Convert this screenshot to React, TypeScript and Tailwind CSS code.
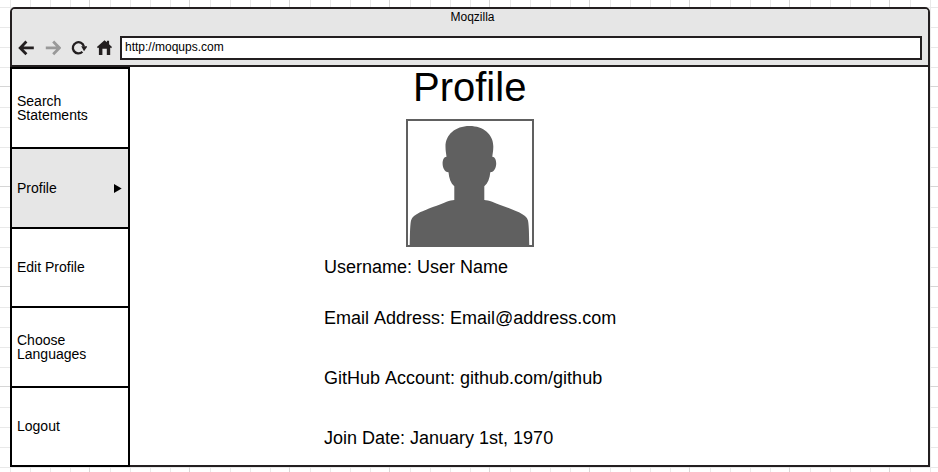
import React from "react";

type MenuItem = { label: string; height: string; active?: boolean };

const menu: MenuItem[] = [
  { label: "Search Statements", height: "h-[80px]" },
  { label: "Profile", height: "h-[80px]", active: true },
  { label: "Edit Profile", height: "h-[79px] pb-px" },
  { label: "Choose Languages", height: "h-[80px]" },
  { label: "Logout", height: "h-[79px] pb-px" },
];

const details = [
  { text: "Username: User Name", height: "h-[51px]" },
  { text: "Email Address: Email@address.com", height: "h-[60px]" },
  { text: "GitHub Account: github.com/github", height: "h-[60px]" },
  { text: "Join Date: January 1st, 1970", height: "h-5" },
];

function Grid() {
  return (
    <svg className="absolute inset-0 h-full w-full" shapeRendering="crispEdges">
      <defs>
        <pattern id="grid" x="10" y="7" width="100" height="100" patternUnits="userSpaceOnUse">
          <path d="M0 .5H100M0 20.5H100M0 40.5H100M0 60.5H100M.5 0V100M20.5 0V100M40.5 0V100M60.5 0V100" stroke="#e9e9e9" />
          <path d="M0 79.5H100M79.5 0V100" stroke="#d6d6d6" />
        </pattern>
      </defs>
      <rect width="100%" height="100%" fill="url(#grid)" />
    </svg>
  );
}

function Toolbar() {
  return (
    <div className="flex h-6 items-center pl-1.5 pr-1.5">
      <svg className="mr-[11px] h-4 w-4" viewBox="0 0 16 16" fill="none" stroke="#231f20" strokeWidth="2.8">
        <path d="M15.800 7.900H2.500M8.400 1.600L2.200 7.900l6.200 6.300" />
      </svg>
      <svg className="mr-[10px] h-4 w-4" viewBox="0 0 16 16" fill="none" stroke="#999" strokeWidth="2.8">
        <path d="M.8 7.900h13.300M8.200 1.600l6.200 6.300-6.200 6.300" />
      </svg>
      <svg className="mr-[9px] h-4 w-4" viewBox="0 0 16 16" fill="none">
        <path d="M11.400 11.800A5.600 5.600 0 1 1 12.900 6.500" stroke="#231f20" strokeWidth="2.3" />
        <path d="M10.200 6.300h6.200L13 11.300z" fill="#231f20" />
      </svg>
      <svg className="mr-2 h-4 w-4" viewBox="0 0 16 16" fill="#231f20">
        <path d="M8.500 .3l2.400 2V.8h2.200v3.400L16 7l-.9 1.200-.9-.6V15h-3.400V8.800H6.400V15H2.900V7.600l-.9.7L.9 7z" />
      </svg>
      <div className="flex h-6 flex-1 items-center border-2 border-[#231f20] bg-white pb-0.5 pl-[3px] text-xs leading-[14px]">
        http://moqups.com
      </div>
    </div>
  );
}

function Sidebar() {
  return (
    <nav className="-ml-0.5 -mb-0.5 w-[120px] shrink-0 border-x-2 border-t-2 border-black bg-white text-sm leading-[14px]">
      {menu.map((item) => (
        <div
          key={item.label}
          className={`flex items-center justify-between border-b-2 border-black pl-[5px] pr-1.5 ${item.height} ${item.active ? "bg-[#e6e6e6]" : ""}`}
        >
          <span className="w-[85px]">{item.label}</span>
          {item.active && (
            <svg className="h-[9px] w-2" viewBox="0 0 8 9">
              <path d="M0 0l7.700 4.500L0 9z" />
            </svg>
          )}
        </div>
      ))}
    </nav>
  );
}

function Avatar() {
  return (
    <svg className="ml-[276px] mt-[11px] h-32 w-32 shrink-0" viewBox="0 0 128 128">
      <rect x="1" y="1" width="126" height="126" fill="white" stroke="#606060" strokeWidth="2" />
      <path
        fill="#606060"
        d="M63.500 7C49 7 39.300 16 39.500 28c0 4 .7 7 1 9.700-5.500 0-5.500 15 2 15.600.5 6 2.300 11 5.800 14V81c-4.300 0-10.300 3-17.600 5.700C22 89.700 17 92 14 93.300 9 96 6 98 5 101.500 3.800 108 4 118 3.700 127h119.600c-.3-9-.1-19-1.300-25.500-1-3.500-4-5.500-9-8.200-3-1.300-8-3.600-16.700-6.600C89 84 82.600 81 78.300 81V67.300c3.500-3 5.500-8 6-14 7.500-.6 7.500-15.600 2-15.600.3-2.700 1-5.700 1-9.700C87.700 16 78 7 63.500 7z"
      />
    </svg>
  );
}

export default function App() {
  return (
    <div className="relative h-[472px] w-[938px] overflow-hidden bg-white pl-[10px] pt-[7px] font-['Liberation_Sans',Arial,sans-serif] text-black">
      <Grid />
      <div className="relative flex h-[460px] w-[920px] flex-col rounded-t-[5px] border-2 border-[#231f20] bg-white">
        <header className="h-[58px] shrink-0 rounded-t-[3px] border-b-2 border-[#231f20] bg-[#e6e6e6]">
          <div className="h-[27px] pl-[5px] pt-px text-center text-xs leading-[14px]">Moqzilla</div>
          <Toolbar />
        </header>
        <div className="flex flex-1">
          <Sidebar />
          <main className="flex flex-1 flex-col">
            <h1 className="ml-[283px] h-[41px] text-[40px] leading-[40px]">Profile</h1>
            <Avatar />
            <div className="ml-[194px] mt-[10px] text-lg leading-5 [font-kerning:none]">
              {details.map((d) => (
                <p key={d.text} className={d.height}>{d.text}</p>
              ))}
            </div>
          </main>
        </div>
      </div>
    </div>
  );
}
